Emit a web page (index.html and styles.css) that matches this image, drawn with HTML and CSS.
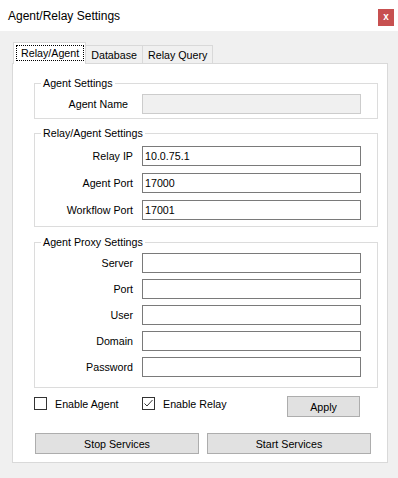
FILE: index.html
```html
<!DOCTYPE html>
<html>
  <head>
    <meta charset="utf-8" />
    <title>Agent/Relay Settings</title>
    <link rel="stylesheet" href="styles.css">
  </head>

  <body>
    <div class="titlebar">
      <span class="title">Agent/Relay Settings</span>
      <span class="close">x</span>
    </div>

    <div class="window">
      <div class="tabs">
        <div class="tab active"><span>Relay/Agent</span></div>
        <div class="tab">Database</div>
        <div class="tab">Relay Query</div>
      </div>

      <div class="panel">
        <fieldset class="group group-agent">
          <legend>Agent Settings</legend>
          <div class="row">
            <label class="narrow">Agent Name</label>
            <input type="text" disabled />
          </div>
        </fieldset>

        <fieldset class="group group-relay">
          <legend>Relay/Agent Settings</legend>
          <div class="row">
            <label>Relay IP</label>
            <input type="text" value="10.0.75.1" />
          </div>
          <div class="row">
            <label>Agent Port</label>
            <input type="text" value="17000" />
          </div>
          <div class="row">
            <label>Workflow Port</label>
            <input type="text" value="17001" />
          </div>
        </fieldset>

        <fieldset class="group group-proxy">
          <legend>Agent Proxy Settings</legend>
          <div class="row">
            <label>Server</label>
            <input type="text" />
          </div>
          <div class="row">
            <label>Port</label>
            <input type="text" />
          </div>
          <div class="row">
            <label>User</label>
            <input type="text" />
          </div>
          <div class="row">
            <label>Domain</label>
            <input type="text" />
          </div>
          <div class="row">
            <label>Password</label>
            <input type="password" />
          </div>
        </fieldset>

        <div class="checks">
          <div class="check first">
            <span class="box"></span>
            <span>Enable Agent</span>
          </div>
          <div class="check">
            <span class="box">
              <svg width="11" height="11" viewBox="0 0 11 11">
                <polyline points="1.5,5.5 4,8 9.5,2" fill="none" stroke="#333" stroke-width="1" />
              </svg>
            </span>
            <span>Enable Relay</span>
          </div>
          <button class="btn apply">Apply</button>
        </div>

        <div class="actions">
          <button class="btn wide">Stop Services</button>
          <button class="btn wide">Start Services</button>
        </div>
      </div>
    </div>
  </body>
</html>
```

FILE: styles.css
```css
body {
  margin: 0;
  background: #f0f0f0;
  font-family: "Liberation Sans", Arial, sans-serif;
  font-size: 10.7px;
  color: #000;
}

.titlebar {
  height: 31px;
  background: #fff;
  display: flex;
  justify-content: space-between;
  align-items: center;
  padding: 0 4px 0 8px;
}

.title {
  font-size: 12px;
}

.close {
  align-self: flex-start;
  margin-top: 9px;
  width: 16px;
  height: 17px;
  background: #c75050;
  color: #fff;
  font-size: 10px;
  font-weight: bold;
  line-height: 16px;
  text-align: center;
}

.window {
  padding: 11px 10px 0 12px;
}

.tabs {
  display: flex;
  align-items: flex-end;
  height: 21px;
  margin-left: 1px;
}

.tab {
  height: 18px;
  line-height: 18px;
  padding: 0 5px;
  border: 1px solid #d9d9d9;
  border-bottom: none;
  background: #f0f0f0;
  margin-left: -1px;
  box-sizing: border-box;
}

.tab.active {
  height: 22px;
  margin-bottom: -1px;
  margin-left: 0;
  padding: 2px 1px 2px 2px;
  background: #fff;
  position: relative;
  z-index: 1;
  line-height: normal;
}

.tab.active span {
  display: block;
  height: 16px;
  line-height: 15px;
  padding: 0 4px;
  border: 1px dotted #000;
  box-sizing: border-box;
}

.panel {
  height: 400px;
  box-sizing: border-box;
  background: #fff;
  border: 1px solid #d9d9d9;
  padding: 13px 9px 0 21px;
}

.group {
  margin: 0;
  border: 1px solid #dcdcdc;
  padding: 0;
  min-width: 0;
}

.group legend {
  margin-left: 6px;
  padding: 0 2px;
  line-height: 13px;
}

.group-agent {
  padding: 4px 0 4px;
}

.group-relay {
  margin-top: 8px;
  padding: 6px 0 6px;
}

.group-relay .row + .row {
  margin-top: 7px;
}

.group-proxy {
  margin-top: 9px;
  padding: 4px 0 10px;
}

.group-proxy .row + .row {
  margin-top: 6px;
}

.row {
  display: flex;
  align-items: center;
  height: 20px;
}

.row label {
  width: 98px;
  text-align: right;
}

.row label.narrow {
  width: 93px;
  padding-right: 5px;
}

.row input {
  margin: 0 0 0 9px;
  width: 219px;
  height: 20px;
  box-sizing: border-box;
  border: 1px solid #7a7a7a;
  padding: 0 2px;
  font-family: inherit;
  font-size: 10.7px;
  background: #fff;
  outline: none;
}

.row input:disabled {
  background: #f0f0f0;
  border-color: #cccccc;
}

.checks {
  display: flex;
  align-items: flex-start;
  margin-top: 8px;
  height: 21px;
}

.check {
  display: flex;
  align-items: center;
  margin-top: 1px;
  height: 13px;
}

.check.first {
  width: 108px;
}

.box {
  width: 13px;
  height: 13px;
  box-sizing: border-box;
  border: 1px solid #333;
  margin-right: 8px;
  display: flex;
  align-items: center;
  justify-content: center;
}

.btn {
  font-family: inherit;
  font-size: 10.7px;
  color: #000;
  background: #e1e1e1;
  border: 1px solid #adadad;
  padding: 0;
  margin: 0;
  outline: none;
}

.apply {
  margin-left: auto;
  margin-right: 18px;
  width: 73px;
  height: 21px;
}

.actions {
  display: flex;
  gap: 8px;
  margin-top: 16px;
  margin-left: 1px;
}

.wide {
  width: 164px;
  height: 21px;
}
```
